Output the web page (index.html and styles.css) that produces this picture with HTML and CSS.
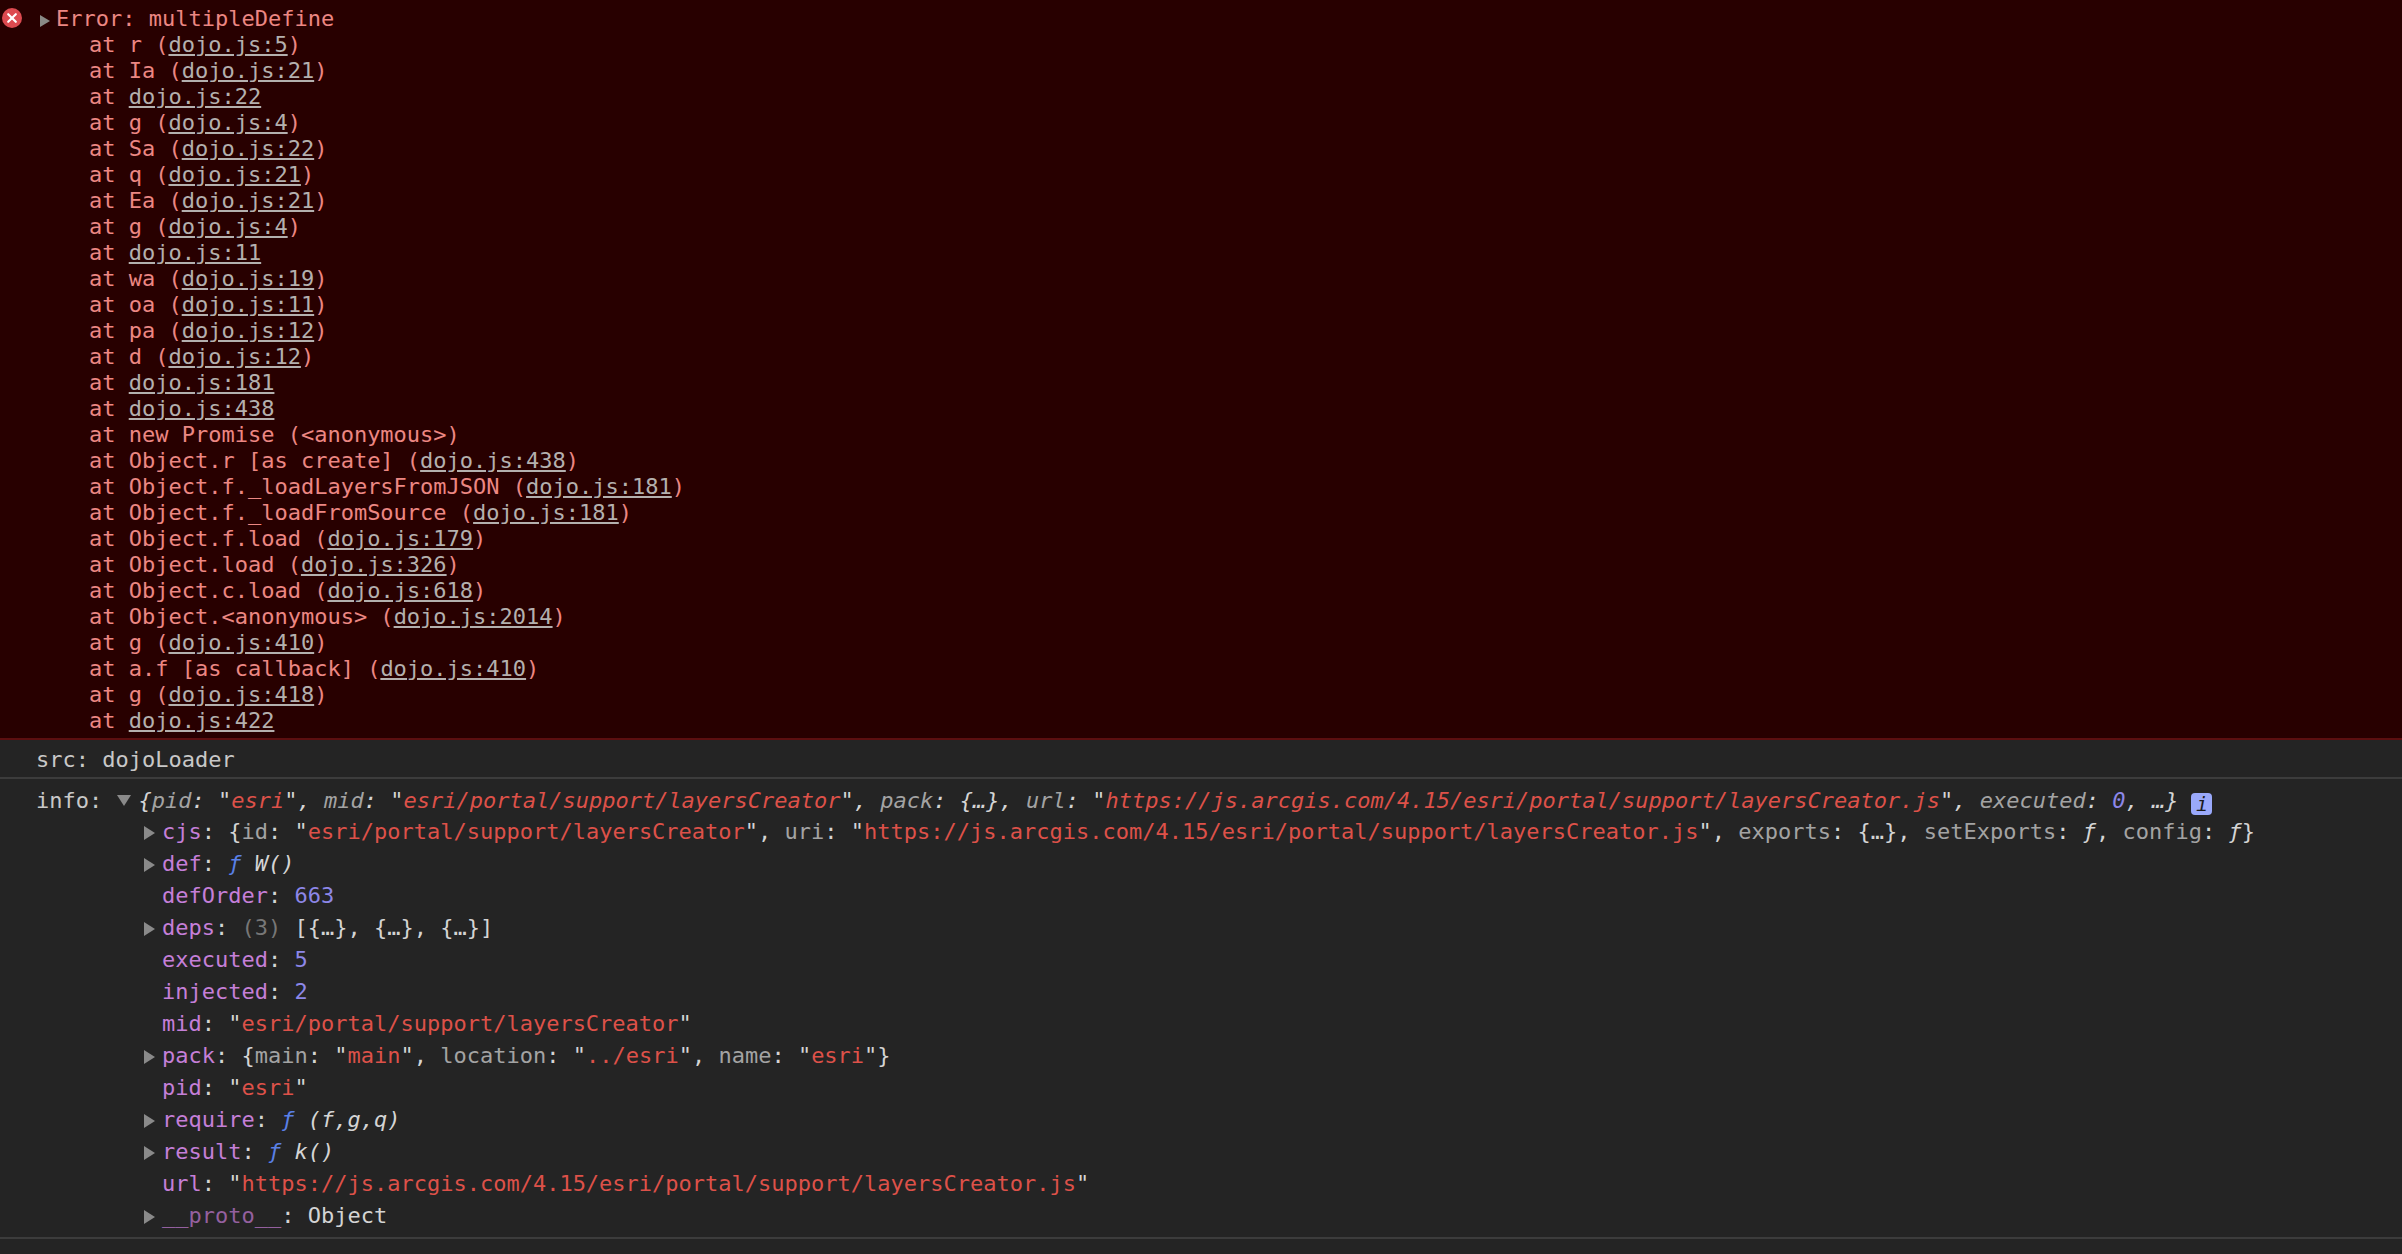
FILE: index.html
```html
<!DOCTYPE html>
<html lang="en">
<head>
<meta charset="utf-8">
<title>Console</title>
<link rel="stylesheet" href="styles.css">
</head>
<body>
<section class="error">
<div class="icon-col"><svg class="err-icon" width="20" height="20" viewBox="0 0 20 20"><circle cx="10" cy="10" r="10" fill="#dd4a50"/><path d="M6.2 6.2 13.8 13.8M13.8 6.2 6.2 13.8" stroke="#fff" stroke-width="2.2" stroke-linecap="round"/></svg></div>
<div class="stack">
<div class="line"><span class="tri-err"></span>Error: multipleDefine</div>
<div class="line">    at r (<a class="src-link">dojo.js:5</a>)</div>
<div class="line">    at Ia (<a class="src-link">dojo.js:21</a>)</div>
<div class="line">    at <a class="src-link">dojo.js:22</a></div>
<div class="line">    at g (<a class="src-link">dojo.js:4</a>)</div>
<div class="line">    at Sa (<a class="src-link">dojo.js:22</a>)</div>
<div class="line">    at q (<a class="src-link">dojo.js:21</a>)</div>
<div class="line">    at Ea (<a class="src-link">dojo.js:21</a>)</div>
<div class="line">    at g (<a class="src-link">dojo.js:4</a>)</div>
<div class="line">    at <a class="src-link">dojo.js:11</a></div>
<div class="line">    at wa (<a class="src-link">dojo.js:19</a>)</div>
<div class="line">    at oa (<a class="src-link">dojo.js:11</a>)</div>
<div class="line">    at pa (<a class="src-link">dojo.js:12</a>)</div>
<div class="line">    at d (<a class="src-link">dojo.js:12</a>)</div>
<div class="line">    at <a class="src-link">dojo.js:181</a></div>
<div class="line">    at <a class="src-link">dojo.js:438</a></div>
<div class="line">    at new Promise (&lt;anonymous&gt;)</div>
<div class="line">    at Object.r [as create] (<a class="src-link">dojo.js:438</a>)</div>
<div class="line">    at Object.f._loadLayersFromJSON (<a class="src-link">dojo.js:181</a>)</div>
<div class="line">    at Object.f._loadFromSource (<a class="src-link">dojo.js:181</a>)</div>
<div class="line">    at Object.f.load (<a class="src-link">dojo.js:179</a>)</div>
<div class="line">    at Object.load (<a class="src-link">dojo.js:326</a>)</div>
<div class="line">    at Object.c.load (<a class="src-link">dojo.js:618</a>)</div>
<div class="line">    at Object.&lt;anonymous&gt; (<a class="src-link">dojo.js:2014</a>)</div>
<div class="line">    at g (<a class="src-link">dojo.js:410</a>)</div>
<div class="line">    at a.f [as callback] (<a class="src-link">dojo.js:410</a>)</div>
<div class="line">    at g (<a class="src-link">dojo.js:418</a>)</div>
<div class="line">    at <a class="src-link">dojo.js:422</a></div>
</div>
</section>
<section class="src-row">src: dojoLoader</section>
<section class="info">
<div class="row head"><span class="label">info: </span><span class="tri-down"></span><i class="pv">{<span class="pk">pid</span>: <span class="q">"</span><span class="s">esri</span><span class="q">"</span>, <span class="pk">mid</span>: <span class="q">"</span><span class="s">esri/portal/support/layersCreator</span><span class="q">"</span>, <span class="pk">pack</span>: {…}, <span class="pk">url</span>: <span class="q">"</span><span class="s">https://js.arcgis.com/4.15/esri/portal/support/layersCreator.js</span><span class="q">"</span>, <span class="pk">executed</span>: <span class="n">0</span>, …}</i><span class="badge">i</span></div>
<div class="row"><span class="tri"></span><span class="k">cjs</span>: {<span class="pk">id</span>: <span class="q">"</span><span class="s">esri/portal/support/layersCreator</span><span class="q">"</span>, <span class="pk">uri</span>: <span class="q">"</span><span class="s">https://js.arcgis.com/4.15/esri/portal/support/layersCreator.js</span><span class="q">"</span>, <span class="pk">exports</span>: {…}, <span class="pk">setExports</span>: <i>ƒ</i>, <span class="pk">config</span>: <i>ƒ</i>}</div>
<div class="row"><span class="tri"></span><span class="k">def</span>: <i class="fn">ƒ</i> <i>W()</i></div>
<div class="row"><span class="tri blank"></span><span class="k">defOrder</span>: <span class="n">663</span></div>
<div class="row"><span class="tri"></span><span class="k">deps</span>: <span class="dim">(3)</span> [{…}, {…}, {…}]</div>
<div class="row"><span class="tri blank"></span><span class="k">executed</span>: <span class="n">5</span></div>
<div class="row"><span class="tri blank"></span><span class="k">injected</span>: <span class="n">2</span></div>
<div class="row"><span class="tri blank"></span><span class="k">mid</span>: <span class="q">"</span><span class="s">esri/portal/support/layersCreator</span><span class="q">"</span></div>
<div class="row"><span class="tri"></span><span class="k">pack</span>: {<span class="pk">main</span>: <span class="q">"</span><span class="s">main</span><span class="q">"</span>, <span class="pk">location</span>: <span class="q">"</span><span class="s">../esri</span><span class="q">"</span>, <span class="pk">name</span>: <span class="q">"</span><span class="s">esri</span><span class="q">"</span>}</div>
<div class="row"><span class="tri blank"></span><span class="k">pid</span>: <span class="q">"</span><span class="s">esri</span><span class="q">"</span></div>
<div class="row"><span class="tri"></span><span class="k">require</span>: <i class="fn">ƒ</i> <i>(f,g,q)</i></div>
<div class="row"><span class="tri"></span><span class="k">result</span>: <i class="fn">ƒ</i> <i>k()</i></div>
<div class="row"><span class="tri blank"></span><span class="k">url</span>: <span class="q">"</span><span class="s">https://js.arcgis.com/4.15/esri/portal/support/layersCreator.js</span><span class="q">"</span></div>
<div class="row"><span class="tri"></span><span class="k proto">__proto__</span>: Object</div>
</section>
</body>
</html>
```
FILE: styles.css
```css
* { box-sizing: border-box; }
html, body { margin: 0; height: 100%; }
body {
  background: #242424;
  color: #d4d4d4;
  font-family: "DejaVu Sans Mono", "Liberation Mono", monospace;
  font-size: 22px;
  overflow: hidden;
}
.error {
  display: flex;
  background: #280000;
  color: #ec8783;
  height: 740px;
  padding: 6px 0 4px;
  border-bottom: 2px solid #5c0f10;
}
.icon-col { width: 36px; flex: none; padding: 2px 0 0 2px; }
.err-icon { display: block; }
.line { height: 26px; line-height: 26px; white-space: pre; }
.src-link { color: #b4b0ae; text-decoration: underline; }
.tri-err {
  display: inline-block;
  vertical-align: -1px;
  border-left: 10px solid #8a8a86;
  border-top: 6.5px solid transparent;
  border-bottom: 6.5px solid transparent;
  margin: 0 6px 0 4px;
}
.src-row {
  height: 39px;
  padding: 4px 0 0 36px;
  line-height: 31px;
  color: #c8c8c8;
  border-bottom: 2px solid #3c3c3c;
  white-space: pre;
}
.info {
  height: 460px;
  padding-top: 5px;
  border-bottom: 2px solid #3c3c3c;
}
.row { height: 32px; line-height: 32px; padding-left: 144px; white-space: pre; }
.head { padding-left: 36px; line-height: 34px; }
.label { color: #c8c8c8; }
.tri {
  display: inline-block;
  vertical-align: -1px;
  width: 0;
  border-left: 11px solid #8a8a8a;
  border-top: 7px solid transparent;
  border-bottom: 7px solid transparent;
  margin-right: 7px;
}
.tri.blank { border-left-color: transparent; }
.tri-down {
  display: inline-block;
  vertical-align: 2px;
  width: 0;
  border-top: 11px solid #8a8a8a;
  border-left: 7px solid transparent;
  border-right: 7px solid transparent;
  margin: 0 7px 0 2px;
}
.k { color: #c57fd8; }
.proto { color: #94609f; }
.pk { color: #a3a3a3; }
.s { color: #dd5149; }
.q { color: #d4d4d4; }
.n { color: #8d87e8; }
.fn { color: #5a80e6; }
.dim { color: #777; }
i { font-style: italic; }
.badge {
  display: inline-block;
  vertical-align: -3px;
  width: 21px;
  height: 22px;
  margin-left: 13px;
  border-radius: 4px;
  background: #9aa9fb;
  color: #1c1c1c;
  font-style: italic;
  font-size: 20px;
  line-height: 22px;
  text-align: center;
}
```
